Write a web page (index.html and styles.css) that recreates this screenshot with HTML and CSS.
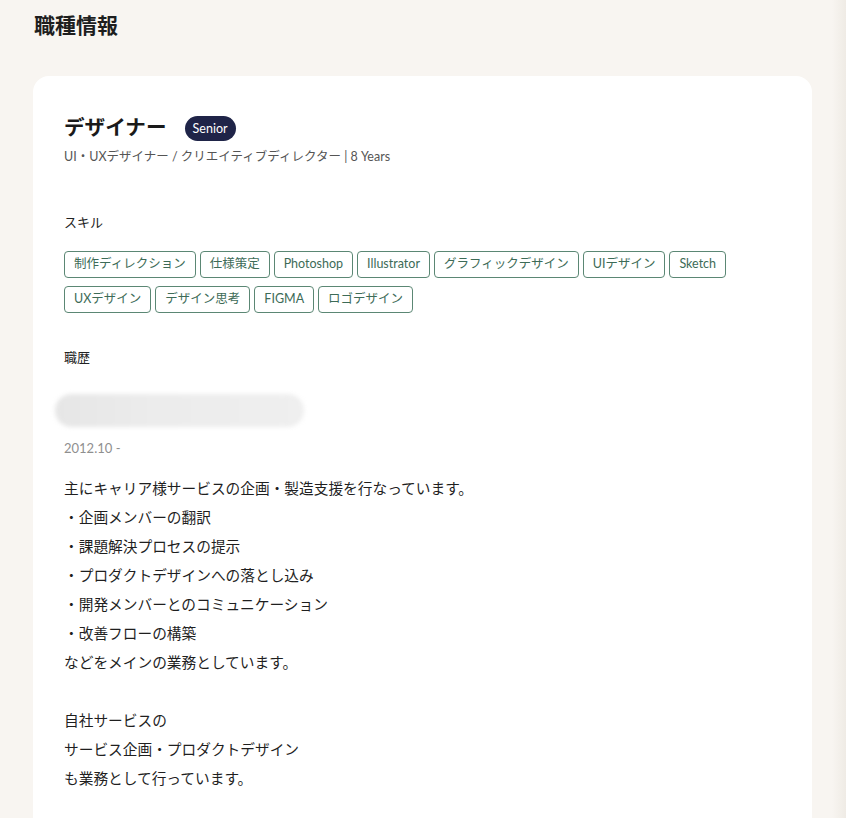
FILE: index.html
```html
<!DOCTYPE html>
<html lang="ja">
<head>
<meta charset="utf-8">
<link rel="stylesheet" href="styles.css">
</head>
<body>
<div class="page">
  <h2 class="page-title">職種情報</h2>
  <section class="card">
    <div class="role-row">
      <h3 class="role">デザイナー</h3>
      <span class="badge">Senior</span>
    </div>
    <p class="role-sub">UI・UXデザイナー / クリエイティブディレクター | 8 Years</p>

    <h4 class="label skills-label">スキル</h4>
    <ul class="tags">
      <li class="tag">制作ディレクション</li>
      <li class="tag">仕様策定</li>
      <li class="tag">Photoshop</li>
      <li class="tag">Illustrator</li>
      <li class="tag">グラフィックデザイン</li>
      <li class="tag">UIデザイン</li>
      <li class="tag">Sketch</li>
      <li class="tag">UXデザイン</li>
      <li class="tag">デザイン思考</li>
      <li class="tag">FIGMA</li>
      <li class="tag">ロゴデザイン</li>
    </ul>

    <h4 class="label history-label">職歴</h4>
    <div class="company-blur"></div>
    <p class="period">2012.10 -</p>
    <div class="desc">
      <p>主にキャリア様サービスの企画・製造支援を行なっています。</p>
      <p>・企画メンバーの翻訳</p>
      <p>・課題解決プロセスの提示</p>
      <p>・プロダクトデザインへの落とし込み</p>
      <p>・開発メンバーとのコミュニケーション</p>
      <p>・改善フローの構築</p>
      <p>などをメインの業務としています。</p>
      <p class="blank">&nbsp;</p>
      <p>自社サービスの</p>
      <p>サービス企画・プロダクトデザイン</p>
      <p>も業務として行っています。</p>
    </div>
  </section>
</div>
</body>
</html>
```
FILE: styles.css
```css
* { box-sizing: border-box; }
html, body {
  margin: 0;
  padding: 0;
  height: 100%;
}
body {
  background: linear-gradient(to right, #f8f5f1 0, #f8f5f1 832px, #efebe5 846px);
  font-family: "Lato", "Noto Sans CJK JP", sans-serif;
  color: #222;
  overflow: hidden;
}
.page {
  padding: 10px 34px 0 33px;
}
.page-title {
  margin: 0 0 0 1px;
  font-size: 21px;
  font-weight: 700;
  line-height: 30px;
  color: #1e1e1e;
}
.card {
  margin-top: 36px;
  width: 779px;
  background: #fff;
  border-radius: 16px;
  padding: 36px 31px 60px 31px;
  min-height: 800px;
}
.role-row {
  display: flex;
  align-items: center;
  gap: 18px;
}
.role {
  margin: 0;
  font-size: 20.6px;
  font-weight: 700;
  line-height: 30px;
  color: #1a1a1a;
}
.badge {
  background: #1f2448;
  color: #fff;
  font-size: 12.5px;
  line-height: 25px;
  height: 25px;
  padding: 0 8px;
  border-radius: 13px;
  margin-top: 2px;
}
.role-sub {
  margin: 6px 0 0 0;
  font-size: 12.5px;
  line-height: 18px;
  color: #555;
}
.label {
  margin: 0;
  font-size: 13px;
  font-weight: 400;
  line-height: 18px;
  color: #222;
}
.skills-label { margin-top: 47px; }
.tags {
  list-style: none;
  margin: 20px 0 0 0;
  padding: 0;
  display: flex;
  flex-wrap: wrap;
  gap: 8px 4px;
  max-width: 700px;
}
.tag {
  border: 1.5px solid #5b8774;
  border-radius: 4px;
  color: #3d6b57;
  font-size: 12.5px;
  font-weight: 400;
  line-height: 24px;
  height: 27px;
  padding: 0 9px;
}
.history-label { margin-top: 35px; }
.company-blur {
  margin: 28px 0 0 -9px;
  width: 249px;
  height: 33px;
  border-radius: 17px;
  background: linear-gradient(to right, #e6e6e6, #ececec 40%, #efefef);
  filter: blur(2px);
}
.period {
  margin: 12px 0 0 0;
  font-size: 13px;
  line-height: 18px;
  color: #8f8f8f;
}
.desc {
  margin-top: 17px;
}
.desc p {
  margin: 0;
  font-size: 14.7px;
  line-height: 29px;
  color: #1f1f1f;
}
```
